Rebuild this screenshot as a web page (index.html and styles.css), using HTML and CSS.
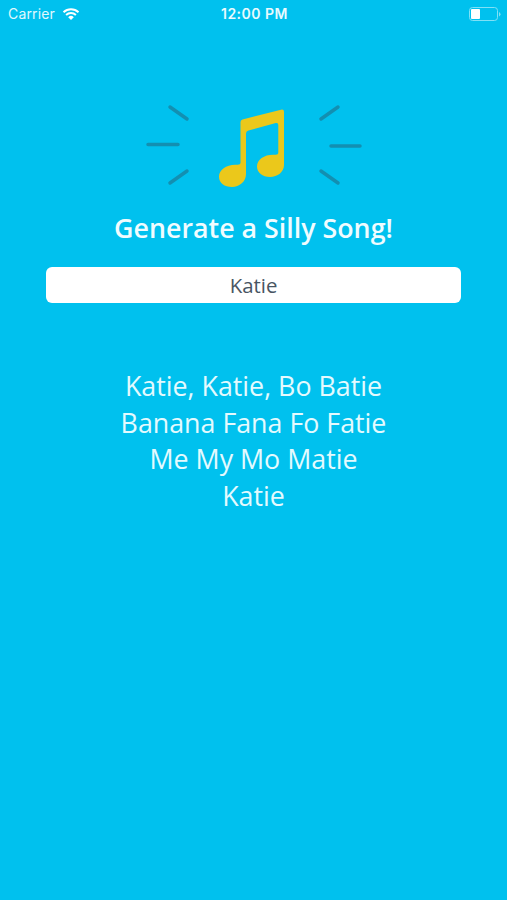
FILE: index.html
```html
<!DOCTYPE html>
<html lang="en">
<head>
    <meta charset="UTF-8">
    <meta name="viewport" content="width=device-width, initial-scale=1.0">
    <title>Silly Song</title>
    <link rel="stylesheet" href="styles.css">
</head>
<body>
    <div class="statusBar">
        <div class="carrier">
            <span>Carrier</span>
            <svg class="wifi" width="18" height="12" viewBox="0 0 17 12">
                <path d="M1 4.2a11 11 0 0 1 15 0M3.600 7a7.200 7.200 0 0 1 9.800 0" fill="none" stroke="#fff" stroke-width="2"/>
                <path d="M8.500 12L5.700 9.200a4 4 0 0 1 5.600 0z" fill="#fff"/>
            </svg>
        </div>
        <div class="time">12:00 PM</div>
        <div class="battery">
            <svg width="32" height="14" viewBox="0 0 32 14">
                <rect x="0.500" y="0.500" width="28" height="13" rx="3" fill="none" stroke="#80e0f6"/>
                <rect x="2" y="2" width="9" height="10" rx="1" fill="#fff"/>
                <path d="M30 5v4.500q1.500-.7 1.500-2.250T30 5z" fill="#80e0f6"/>
            </svg>
        </div>
    </div>
    <div class="container">
        <svg class="logo" width="236" height="100" viewBox="0 0 236 100">
            <!-- rays -->
            <g stroke="#138fb1" stroke-width="3.500" stroke-linecap="round">
                <path d="M34 13l17 12M12 50.500h30M34 89l17-12"/>
                <path d="M202 13l-17 12M195 52h29M202 89l-17-12"/>
            </g>
            <!-- note -->
            <path fill="#ebc81b" d="M104.500 28q0-2 2-2.600L145 15.700q3-.7 3 2V71c0 7-6.500 12-14 12s-13-4.300-13-10.500c0-7.500 8-12.500 18-11.800q3.300.3 3.300-1.700V31q0-2.500-2.500-2L112.500 36.500q-2.500.6-2.500 3V80c0 7.500-6.500 13-14 13s-13-4-13-10.300c0-7.500 8-12.700 18-12q3.500.3 3.500-1.700z"/>
        </svg>
        <h1>Generate a Silly Song!</h1>
        <input type="text" value="Katie" aria-label="Name">
        <div class="lyrics">
            <p>Katie, Katie, Bo Batie</p>
            <p>Banana Fana Fo Fatie</p>
            <p>Me My Mo Matie</p>
            <p>Katie</p>
        </div>
    </div>
</body>
</html>
```

FILE: styles.css
```css
* {
    margin: 0;
    padding: 0;
    box-sizing: border-box;
}

body {
    min-height: 100vh;
    background: #00c1ee;
    color: white;
    font-family: "Open Sans", sans-serif;
}

.statusBar {
    height: 27px;
    display: grid;
    grid-template-columns: 1fr auto 1fr;
    align-items: center;
    padding: 0 6px 0 8px;
    font-family: Inter, sans-serif;
    font-size: 14px;
}

.carrier {
    display: flex;
    align-items: center;
    gap: 7px;
    letter-spacing: 0.15px;
    color: #e0f8fd;
}

.wifi {
    display: block;
}

.time {
    font-size: 14px;
    font-weight: 600;
    letter-spacing: 0.5px;
    color: #e8fafe;
}

.battery {
    display: flex;
    justify-content: flex-end;
}

.container {
    display: flex;
    flex-direction: column;
    align-items: center;
    padding-top: 67px;
}

.logo {
    display: block;
}

h1 {
    margin-top: 15px;
    font-size: 26.8px;
    font-weight: 600;
    line-height: 38px;
    color: #f0fcff;
}

input {
    width: 415px;
    height: 36px;
    margin-top: 20px;
    border: none;
    outline: none;
    border-radius: 6px;
    background: white;
    color: #485563;
    font-family: "Open Sans", sans-serif;
    font-size: 20.4px;
    text-align: center;
}

.lyrics {
    margin-top: 65px;
    font-size: 26.8px;
    line-height: 36.6px;
    text-align: center;
    color: #e4fafe;
}
```
